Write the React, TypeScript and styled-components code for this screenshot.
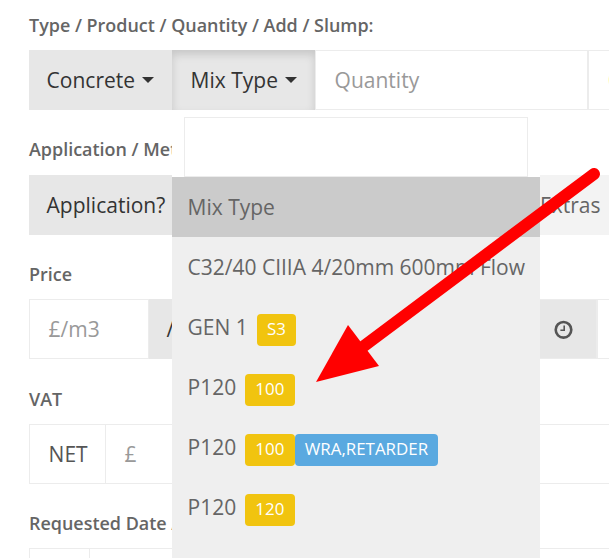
import React from "react";
import styled, { createGlobalStyle } from "styled-components";

const Global = createGlobalStyle`
  * { box-sizing: border-box; }
  body { margin: 0; background: #fff; overflow: hidden; font-family: "Open Sans", sans-serif; }
`;

const Page = styled.main`
  position: relative;
  width: 609px;
  height: 558px;
  overflow: hidden;
  padding-left: 29px;
  font-size: 21px;
  color: #656565;
`;

const Label = styled.div<{ $h: number; $gap?: number }>`
  height: ${(p) => p.$h}px;
  display: flex;
  align-items: flex-end;
  padding-bottom: ${(p) => p.$gap ?? 13}px;
  font-size: 17.95px;
  line-height: 24px;
  font-weight: 600;
  white-space: nowrap;
`;

const Row = styled.div`
  display: flex;
  width: 680px;
  height: 60px;
`;

const Button = styled.div<{ $w: number; $open?: boolean }>`
  display: flex;
  align-items: center;
  flex: none;
  width: ${(p) => p.$w}px;
  padding: 0 ${(p) => (p.$open ? 18.6 : 17.6)}px;
  background: #e7e7e7;
  color: #333;
  white-space: nowrap;
  box-shadow: ${(p) => (p.$open ? "inset 0 4.5px 8px rgba(0, 0, 0, 0.14)" : "none")};
`;

const Caret = styled.span`
  margin-left: 7px;
  border-top: 6px solid #333;
  border-left: 6px solid transparent;
  border-right: 6px solid transparent;
`;

const Field = styled.div<{ $w: number; $joined?: boolean }>`
  display: flex;
  align-items: center;
  flex: none;
  width: ${(p) => p.$w}px;
  height: 60px;
  padding-left: 18.6px;
  border: 1px solid #ececec;
  border-left-width: ${(p) => (p.$joined ? 0 : 1)}px;
  color: #999;
  white-space: nowrap;
`;

const Addon = styled(Field)`
  color: #555;
`;

const Pale = styled.span`
  color: #fff6a8;
`;

const Extras = styled.div`
  display: flex;
  align-items: center;
  flex: none;
  width: 200px;
  padding-left: 31px;
  background: #f3f3f3;
`;

const ClockBox = styled.div`
  display: flex;
  align-items: center;
  justify-content: flex-end;
  flex: none;
  width: 87px;
  padding-right: 23px;
  background: #e7e7e7;
  border: 1px solid #ececec;
  border-right-width: 2px;
`;

const Menu = styled.div`
  position: absolute;
  left: 172px;
  top: 110px;
  width: 368px;
  height: 448px;
  background: #efefef;
`;

const SearchWrap = styled.div`
  height: 67px;
  padding: 7px 12px 0;
  background: #fff;
`;

const SearchBox = styled.div`
  height: 60px;
  border: 1px solid #ececec;
`;

const Item = styled.div<{ $active?: boolean }>`
  display: flex;
  align-items: center;
  height: 60px;
  padding-left: 15.5px;
  background: ${(p) => (p.$active ? "#cbcbcb" : "transparent")};
  white-space: nowrap;
`;

const Badges = styled.span`
  display: flex;
  margin: 5px 0 0 9px;
`;

const Badge = styled.span<{ $blue?: boolean }>`
  height: 32px;
  padding: 0 10.2px;
  border-radius: 4px;
  background: ${(p) => (p.$blue ? "#5aa9e0" : "#f1c40f")};
  color: #fff;
  font-size: 16.9px;
  line-height: 30px;
`;

const Arrow = styled.svg`
  position: absolute;
  left: 0;
  top: 0;
  pointer-events: none;
`;

const items: { text: string; add?: string; extra?: string }[] = [
  { text: "Mix Type" },
  { text: "C32/40 CIIIA 4/20mm 600mm Flow" },
  { text: "GEN 1", add: "S3" },
  { text: "P120", add: "100" },
  { text: "P120", add: "100", extra: "WRA,RETARDER" },
  { text: "P120", add: "120" },
];

const Clock = () => (
  <svg width="19" height="19" viewBox="0 0 19 19" fill="none" stroke="#555">
    <circle cx="9.5" cy="9.8" r="7.8" strokeWidth="2.6" />
    <path d="M10.2 5.5V10.3H6.4" strokeWidth="1.6" />
  </svg>
);

export default function App() {
  return (
    <>
      <Global />
      <Page>
        <Label $h={50}>Type / Product / Quantity / Add / Slump:</Label>
        <Row>
          <Button $w={143}>Concrete<Caret /></Button>
          <Button $w={143} $open>Mix Type<Caret /></Button>
          <Field $w={273}>Quantity</Field>
          <Field $w={90}><Pale>C</Pale></Field>
        </Row>
        <Label $h={65} $gap={14}>Application / Method</Label>
        <Row>
          <Button $w={150}>Application?</Button>
          <Button $w={330} />
          <Extras>Extras</Extras>
        </Row>
        <Label $h={64}>Price</Label>
        <Row>
          <Field $w={120}>£/m3</Field>
          <Button $w={362}>/m3</Button>
          <ClockBox><Clock /></ClockBox>
          <Field $w={90} $joined />
        </Row>
        <Label $h={65}>VAT</Label>
        <Row>
          <Addon $w={77}>NET</Addon>
          <Field $w={590} $joined>£</Field>
        </Row>
        <Label $h={64}>Requested Date / Time</Label>
        <Row>
          <Field $w={61} />
          <Field $w={600} $joined />
        </Row>
        <Menu>
          <SearchWrap><SearchBox /></SearchWrap>
          {items.map((it, i) => (
            <Item key={i} $active={i === 0}>
              {it.text}
              {it.add && (
                <Badges>
                  <Badge>{it.add}</Badge>
                  {it.extra && <Badge $blue>{it.extra}</Badge>}
                </Badges>
              )}
            </Item>
          ))}
        </Menu>
        <Arrow width="609" height="558" viewBox="0 0 609 558">
          <path d="M364 346L594 174" stroke="#f00" strokeWidth="12" strokeLinecap="round" />
          <path d="M316 382L348 325L379 366Z" fill="#f00" />
        </Arrow>
      </Page>
    </>
  );
}
